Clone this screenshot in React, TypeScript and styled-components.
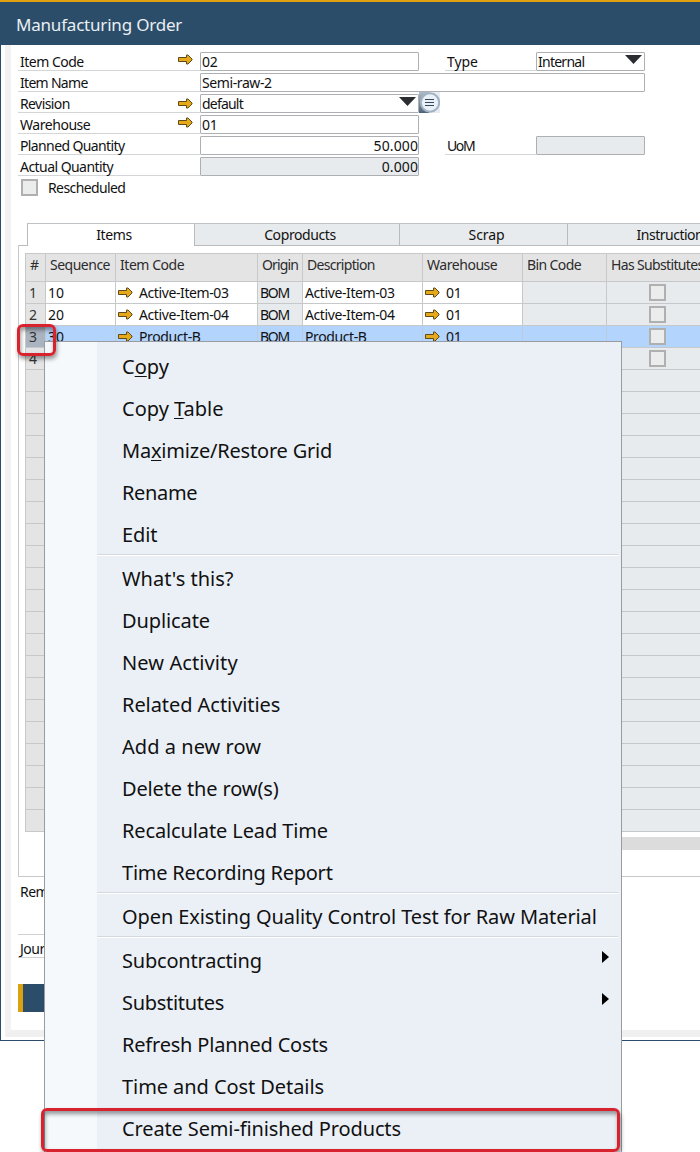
import React from "react";
import styled, { createGlobalStyle, css } from "styled-components";

const Global = createGlobalStyle`
  * { box-sizing: border-box; }
  html, body { margin: 0; padding: 0; background: #fff; }
  body { width: 700px; height: 1152px; overflow: hidden; }
`;

const navy = "#2c4d69";
const gold = "#e0a010";
const line = "#c6c8ca";

const Page = styled.div`
  position: relative;
  width: 700px;
  height: 1152px;
  overflow: hidden;
  background: #fff;
  color: #111;
  font: 14px/19px "Noto Sans", "Open Sans", sans-serif;
  white-space: nowrap;
`;

const Window = styled.div`
  height: 1041px;
  border-left: 1px solid ${navy};
  border-bottom: 1px solid ${navy};
  display: flex;
  flex-direction: column;
`;

const TitleBar = styled.header`
  height: 45px;
  flex: none;
  margin-left: -1px;
  border-top: 2px solid ${gold};
  background: ${navy};
  color: #e9eff4;
  font-size: 17px;
  line-height: 46px;
  padding-left: 16px;
  letter-spacing: -0.2px;
`;

const Frame = styled.div`
  flex: 1;
  margin: 0 0 3px 4px;
  border-left: 6px solid #f2f2f2;
  border-bottom: 7px solid #f0f0f0;
  padding: 7px 0 0 7px;
`;

const FormRow = styled.div`
  display: flex;
  height: 21px;
`;

const Label = styled.div<{ $w: number; $ls?: number; $gap?: number }>`
  display: flex;
  justify-content: space-between;
  width: ${(p) => p.$w}px;
  margin-left: ${(p) => p.$gap ?? 0}px;
  height: 19px;
  border-bottom: 1px solid #d3d5d7;
  padding: 0 7px 0 2px;
  letter-spacing: ${(p) => p.$ls ?? -0.4}px;
`;

const Field = styled.div<{ $w: number; $off?: boolean; $right?: boolean; $ls?: number }>`
  display: flex;
  justify-content: ${(p) => (p.$right ? "flex-end" : "space-between")};
  width: ${(p) => p.$w}px;
  height: 19px;
  border: 1px solid #adafb3;
  border-radius: 1px;
  background: ${(p) => (p.$off ? "#e8ebed" : "#fff")};
  padding: 0 ${(p) => (p.$right ? 0 : 2)}px 0 1px;
  line-height: 18px;
  letter-spacing: ${(p) => p.$ls ?? -0.4}px;
`;

const LinkArrow = styled.svg<{ $up?: number }>`
  flex: none;
  width: 15px;
  height: 11px;
  margin-top: ${(p) => p.$up ?? 0}px;
`;

const Caret = styled.svg`
  width: 17px;
  height: 9px;
  margin-top: 2px;
`;

const Check = styled.span`
  display: inline-block;
  flex: none;
  width: 17px;
  height: 17px;
  border: 2px solid #b0b0b0;
  background: #ebecec;
`;

const CheckSlot = styled.span`
  display: flex;
  padding-left: 40px;
`;

const CheckRow = styled.div`
  display: flex;
  align-items: center;
  gap: 10px;
  height: 19px;
  padding-left: 3px;
  letter-spacing: -0.6px;
`;

const Tabs = styled.nav`
  display: flex;
  height: 23px;
  margin-top: 26px;
  border-bottom: 1px solid #b9bcbf;
  padding-left: 9px;
`;

const Tab = styled.div<{ $w: number; $on?: boolean; $ls?: number }>`
  flex: none;
  width: ${(p) => p.$w}px;
  height: 23px;
  border-top: 1px solid #c0c3c6;
  border-left: 1px solid #b9bcbf;
  background: ${(p) => (p.$on ? "#fff" : "#e8ebed")};
  border-bottom: ${(p) => (p.$on ? "none" : "1px solid #b9bcbf")};
  text-align: center;
  line-height: 22px;
  padding-left: 6px;
  letter-spacing: ${(p) => p.$ls ?? -0.4}px;
`;

const Panel = styled.div`
  height: 632px;
  border-left: 1px solid ${line};
  border-bottom: 1px solid ${line};
  margin-top: -1px;
  padding: 8px 0 0 6px;
`;

const columns = "20px 70px 142px 45px 120px 100px 84px 120px";

const Grid = styled.div`
  width: 700px;
  border-left: 1px solid ${line};
  border-top: 1px solid ${line};
`;

const HeadRow = styled.div`
  display: grid;
  grid-template-columns: ${columns};
  height: 28px;
`;

const HeadCell = styled.div<{ $ls?: number }>`
  background: #e4e4e4;
  color: #2c2c2c;
  border-right: 1px solid ${line};
  border-bottom: 1px solid ${line};
  padding-left: 4px;
  line-height: 21px;
  letter-spacing: ${(p) => p.$ls ?? -0.45}px;
`;

const Row = styled.div`
  display: grid;
  grid-template-columns: ${columns};
  height: 22px;
`;

const Cell = styled.div<{ $tone: "white" | "off" | "num" | "sel" | "selnum"; $ls?: number }>`
  display: flex;
  align-items: center;
  border-right: 1px solid ${(p) => (p.$tone === "sel" ? "#b9cbe0" : line)};
  border-bottom: 1px solid ${line};
  background: ${(p) =>
    ({ white: "#fff", off: "#e8ebed", num: "#e4e4e4", sel: "#b3d4fd", selnum: "#aab4c0" })[p.$tone]};
  padding-left: 2px;
  line-height: 21px;
  letter-spacing: ${(p) => p.$ls ?? -0.4}px;
  ${(p) => (p.$tone === "num" || p.$tone === "selnum") && css`padding-left: 3px; color: #333;`}
`;

const Linked = styled.span`
  display: flex;
  align-items: center;
  gap: 6px;
`;

const ScrollBar = styled.div`
  height: 13px;
  margin: 5px 0 0 40px;
  background: #dcdcdc;
`;

const NoteLabel = styled.div<{ $h: number; $top: number }>`
  height: ${(p) => p.$h}px;
  margin-top: ${(p) => p.$top}px;
  border-bottom: 1px solid #cfd1d3;
  padding-left: 2px;
  width: 160px;
  letter-spacing: -0.5px;
`;

const ActionButton = styled.div`
  width: 100px;
  height: 28px;
  margin-top: 26px;
  border-left: 5px solid #dba10f;
  background: ${navy};
`;

const Menu = styled.div`
  position: absolute;
  left: 44px;
  top: 341px;
  width: 578px;
  height: 830px;
  border: 1px solid #989ca0;
  padding: 2px 3px 0 0;
  background: linear-gradient(to right, #f5f9fc 52px, #ebf0f7 52px);
  color: #111;
  font: 20px/42px "Noto Sans", "Open Sans", sans-serif;
`;

const MenuItem = styled.div<{ $ls?: number }>`
  display: flex;
  justify-content: space-between;
  height: 42px;
  padding: 2px 9px 0 77px;
  letter-spacing: ${(p) => p.$ls ?? 0}px;
  u { text-underline-offset: 2px; text-decoration-thickness: 1px; }
`;

const Divider = styled.div`
  height: 2px;
  margin-left: 52px;
  border-top: 1px solid #d3d9df;
  background: #fff;
`;

const SubArrow = styled.svg`
  width: 7px;
  height: 12px;
  margin-top: 11px;
`;

const Highlight = styled.div<{ $x: number; $y: number; $w: number; $h: number }>`
  position: absolute;
  left: ${(p) => p.$x}px;
  top: ${(p) => p.$y}px;
  width: ${(p) => p.$w}px;
  height: ${(p) => p.$h}px;
  border: 3px solid #d8232e;
  border-radius: 6px;
  box-shadow: 1px 3px 4px rgba(0, 0, 0, 0.4), inset 1px 3px 4px rgba(0, 0, 0, 0.4);
`;

const ListButton = styled.svg`
  width: 21px;
  height: 21px;
  margin-top: -2px;
`;

const Arrow = ({ up }: { up?: number }) => (
  <LinkArrow $up={up} viewBox="0 0 15 11">
    <path d="M.5 3.5H8.5V1L10 1 14 5 14 6 10 10 8.5 10V7.5H.5Z" fill="#e6a91a" stroke="#5e4b1c" strokeWidth="1" />
  </LinkArrow>
);

const Down = () => (
  <Caret viewBox="0 0 17 9">
    <path d="M0 0H17L8.5 9Z" fill="#2b2c30" />
  </Caret>
);

const rows = [
  { n: 1, seq: "10", item: "Active-Item-03" },
  { n: 2, seq: "20", item: "Active-Item-04" },
  { n: 3, seq: "30", item: "Product-B", selected: true },
];

const menu: { t: React.ReactNode; ls?: number; sub?: boolean; sep?: boolean }[] = [
  { t: <span>C<u>o</u>py</span> },
  { t: <span>Copy <u>T</u>able</span> },
  { t: <span>Ma<u>x</u>imize/Restore Grid</span>, ls: -0.2 },
  { t: "Rename", ls: -0.35 },
  { t: "Edit", ls: -0.1, sep: true },
  { t: "What's this?" },
  { t: "Duplicate", ls: -0.1 },
  { t: "New Activity", ls: 0.1 },
  { t: "Related Activities", ls: -0.06 },
  { t: "Add a new row", ls: 0.04 },
  { t: "Delete the row(s)", ls: -0.14 },
  { t: "Recalculate Lead Time", ls: -0.12 },
  { t: "Time Recording Report", ls: -0.24, sep: true },
  { t: "Open Existing Quality Control Test for Raw Material", ls: -0.1, sep: true },
  { t: "Subcontracting", ls: -0.2, sub: true },
  { t: "Substitutes", ls: -0.3, sub: true },
  { t: "Refresh Planned Costs", ls: -0.2 },
  { t: "Time and Cost Details", ls: -0.07 },
  { t: "Create Semi-finished Products", ls: -0.13 },
];

export default function App() {
  return (
    <Page>
      <Global />
      <Window>
        <TitleBar>Manufacturing Order</TitleBar>
        <Frame>
          <FormRow>
            <Label $w={182} $ls={-0.5}>Item Code<Arrow up={2} /></Label>
            <Field $w={219} $ls={-0.2}>02</Field>
            <Label $w={91} $gap={26} $ls={-0.1}>Type</Label>
            <Field $w={109} $ls={-0.75}>Internal<Down /></Field>
          </FormRow>
          <FormRow>
            <Label $w={182} $ls={-0.7}>Item Name</Label>
            <Field $w={445}>Semi-raw-2</Field>
          </FormRow>
          <FormRow>
            <Label $w={182} $ls={-0.6}>Revision<Arrow up={4} /></Label>
            <Field $w={219} $ls={-0.8}>default<Down /></Field>
            <ListButton viewBox="0 0 21 21">
              <defs>
                <linearGradient id="lb" x1="0" y1="0" x2="0" y2="1">
                  <stop offset="0" stopColor="#aebccb" />
                  <stop offset="1" stopColor="#4f6378" />
                </linearGradient>
              </defs>
              <rect width="10" height="21" fill="url(#lb)" />
              <rect x="10" width="11" height="21" fill="#e6ecf2" />
              <circle cx="11" cy="10.5" r="9.2" fill="#e9f0f8" stroke="#a3b2c2" strokeWidth="2" />
              <path d="M6 7.5H15M6 10.5H15M6 13.5H15" stroke="#37475a" />
            </ListButton>
          </FormRow>
          <FormRow>
            <Label $w={182} $ls={-0.45}>Warehouse<Arrow up={2} /></Label>
            <Field $w={219} $ls={-0.2}>01</Field>
          </FormRow>
          <FormRow>
            <Label $w={182} $ls={-0.62}>Planned Quantity</Label>
            <Field $w={219} $right $ls={0.1}>50.000</Field>
            <Label $w={91} $gap={26} $ls={-1.4}>UoM</Label>
            <Field $w={109} $off />
          </FormRow>
          <FormRow>
            <Label $w={182} $ls={-0.55}>Actual Quantity</Label>
            <Field $w={219} $off $right $ls={0.1}>0.000</Field>
          </FormRow>
          <CheckRow><Check />Rescheduled</CheckRow>
          <Tabs>
            <Tab $w={167} $on $ls={-0.4}>Items</Tab>
            <Tab $w={205}>Coproducts</Tab>
            <Tab $w={168} $ls={-0.1}>Scrap</Tab>
            <Tab $w={205} $ls={-0.5}>Instructions</Tab>
          </Tabs>
          <Panel>
            <Grid>
              <HeadRow>
                <HeadCell>#</HeadCell>
                <HeadCell $ls={-0.5}>Sequence</HeadCell>
                <HeadCell>Item Code</HeadCell>
                <HeadCell $ls={-0.85}>Origin</HeadCell>
                <HeadCell $ls={-0.7}>Description</HeadCell>
                <HeadCell>Warehouse</HeadCell>
                <HeadCell $ls={-0.6}>Bin Code</HeadCell>
                <HeadCell $ls={-0.65}>Has Substitutes</HeadCell>
              </HeadRow>
              {rows.map((r) => {
                const a = r.selected ? "sel" : "white";
                const b = r.selected ? "sel" : "off";
                return (
                  <Row key={r.n}>
                    <Cell $tone={r.selected ? "selnum" : "num"}>{r.n}</Cell>
                    <Cell $tone={a} $ls={-0.1}>{r.seq}</Cell>
                    <Cell $tone={a}><Linked><Arrow />{r.item}</Linked></Cell>
                    <Cell $tone={b} $ls={-1.3}>BOM</Cell>
                    <Cell $tone={a}>{r.item}</Cell>
                    <Cell $tone={a} $ls={-0.2}><Linked><Arrow />01</Linked></Cell>
                    <Cell $tone={b} />
                    <Cell $tone={b}><CheckSlot><Check /></CheckSlot></Cell>
                  </Row>
                );
              })}
              {Array.from({ length: 22 }, (_, i) => (
                <Row key={i}>
                  <Cell $tone="num">{i === 0 ? 4 : ""}</Cell>
                  {Array.from({ length: 6 }, (_, j) => <Cell key={j} $tone="off" />)}
                  <Cell $tone="off">{i === 0 && <CheckSlot><Check /></CheckSlot>}</Cell>
                </Row>
              ))}
            </Grid>
            <ScrollBar />
          </Panel>
          <NoteLabel $top={5} $h={53}>Remarks</NoteLabel>
          <NoteLabel $top={4} $h={19}>Journal Remark</NoteLabel>
          <ActionButton />
        </Frame>
      </Window>
      <Menu>
        {menu.map((m, i) => (
          <React.Fragment key={i}>
            <MenuItem $ls={m.ls}>
              {m.t}
              {m.sub && <SubArrow viewBox="0 0 7 12"><path d="M0 0L7 6 0 12Z" fill="#000" /></SubArrow>}
            </MenuItem>
            {m.sep && <Divider />}
          </React.Fragment>
        ))}
      </Menu>
      <Highlight $x={17} $y={324} $w={39} $h={32} />
      <Highlight $x={41} $y={1108} $w={579} $h={44} />
    </Page>
  );
}
